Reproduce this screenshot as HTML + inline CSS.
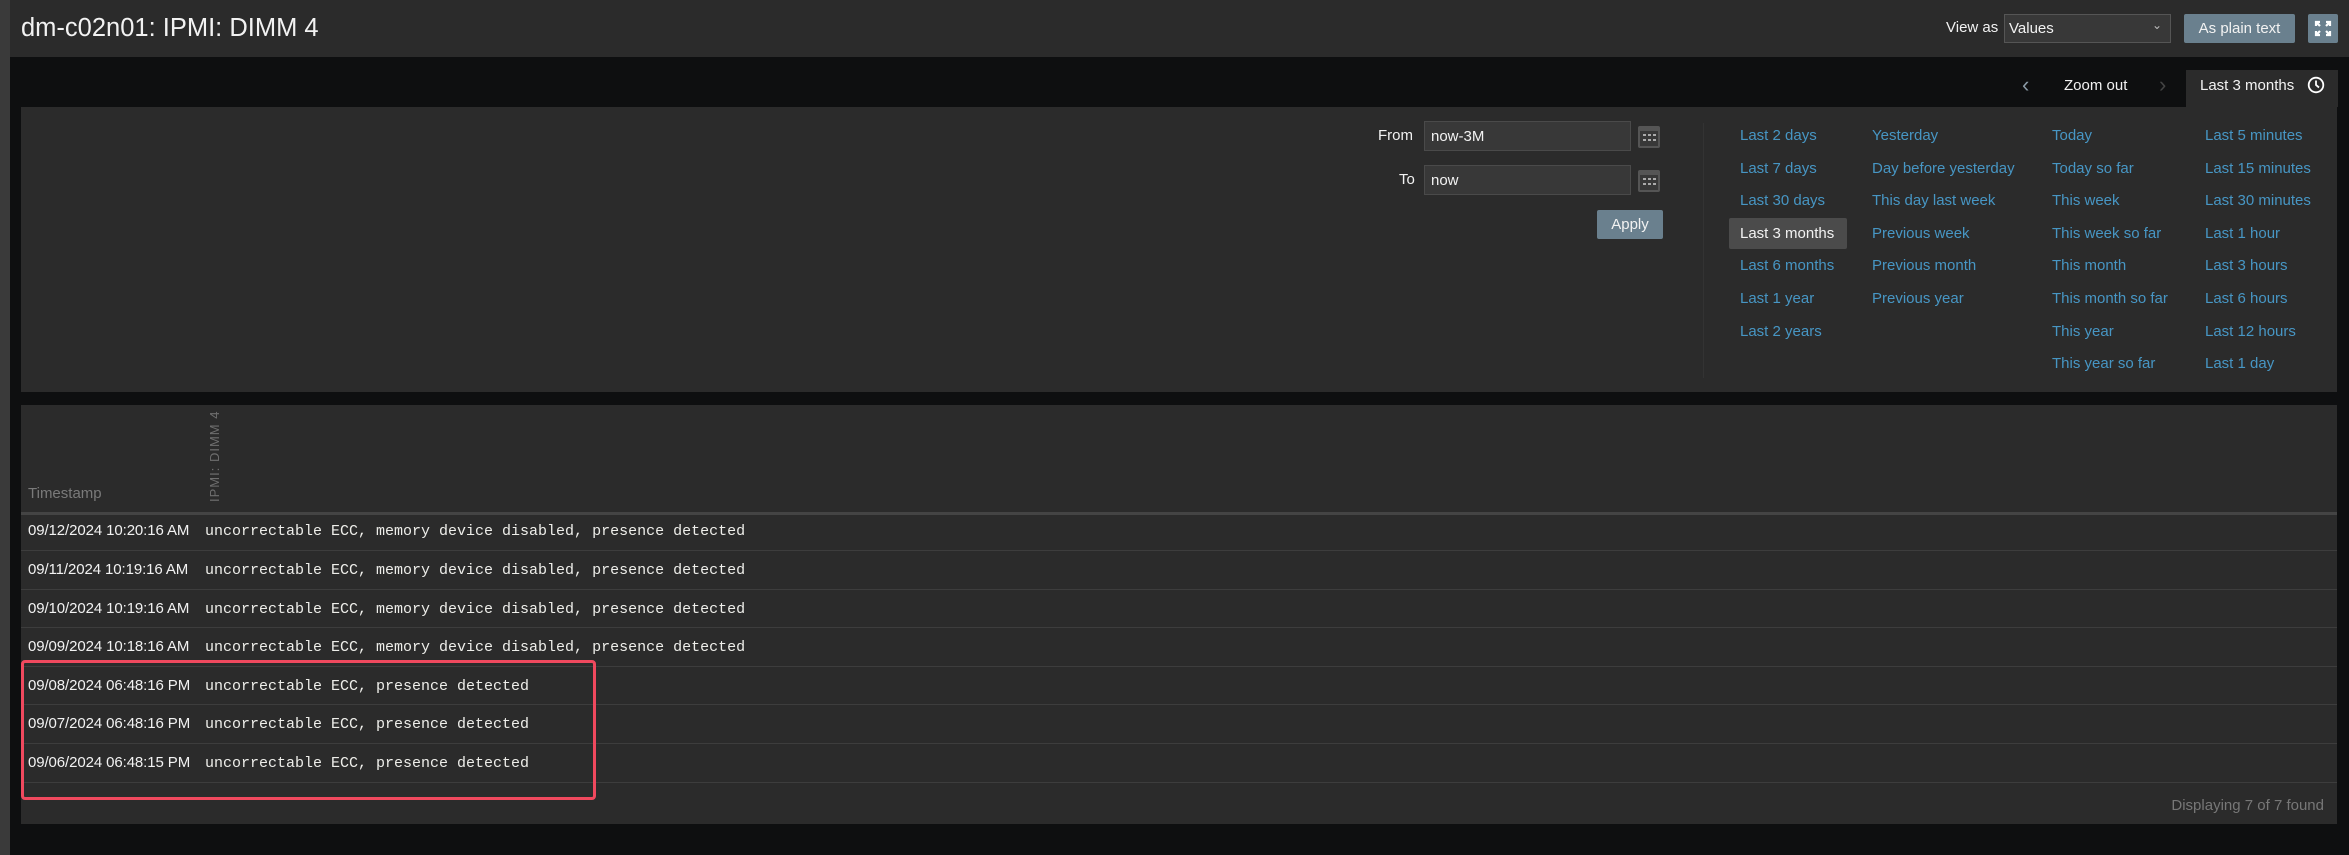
<!DOCTYPE html>
<html><head><meta charset="utf-8"><style>
*{box-sizing:border-box;margin:0;padding:0}
body{width:2349px;height:855px;background:#0e0f10;font-family:"Liberation Sans",sans-serif;position:relative;overflow:hidden;color:#f2f2f2}
.a{position:absolute}
.link{position:absolute;color:#4796c4;font-size:15px;white-space:nowrap}
.ts{position:absolute;left:28px;font-size:15px;letter-spacing:-0.1px;color:#f2f2f2}
.val{position:absolute;left:205px;font-family:"Liberation Mono",monospace;font-size:15px;color:#eeeeea;white-space:pre}
.line{position:absolute;left:21px;width:2316px;height:1px;background:#3d3d3d}
</style></head><body>
<div class="a" style="left:0;top:0;width:10px;height:855px;background:#3a3a3a"></div>
<div class="a" style="left:10px;top:0;width:2339px;height:57px;background:#2b2b2b"></div>
<div class="a" style="left:21px;top:14px;font-size:25.5px;color:#f2f2f2">dm-c02n01: IPMI: DIMM 4</div>
<div class="a" style="left:1946px;top:19px;font-size:15px">View as</div>
<div class="a" style="left:2004px;top:14px;width:167px;height:29px;background:#383838;border:1px solid #555;font-size:15px;padding:5px 0 0 4px">Values<span style="position:absolute;right:8px;top:3px;font-size:12px;color:#bbb">&#8964;</span></div>
<div class="a" style="left:2184px;top:14px;width:111px;height:29px;background:#6a808e;border-radius:2px;font-size:15px;text-align:center;line-height:29px">As plain text</div>
<div class="a" style="left:2308px;top:14px;width:30px;height:29px;background:#6a808e;border-radius:2px">
<svg width="30" height="29" viewBox="0 0 30 29"><g fill="none" stroke="#fff" stroke-width="2.2"><path d="M8 12V8h4M8 8l4 4M22 12V8h-4M22 8l-4 4M8 17v4h4M8 21l4-4M22 17v4h-4M22 21l-4-4"/></g></svg></div>
<div class="a" style="left:2022px;top:72px;font-size:22px;color:#8a9aa6">&#x2039;</div>
<div class="a" style="left:2064px;top:77px;font-size:15px">Zoom out</div>
<div class="a" style="left:2159px;top:72px;font-size:22px;color:#444">&#x203A;</div>
<div class="a" style="left:2186px;top:70px;width:152px;height:37px;background:#2b2b2b"></div>
<div class="a" style="left:2200px;top:77px;font-size:15px">Last 3 months</div>
<svg class="a" style="left:2307px;top:76px" width="18" height="18" viewBox="0 0 18 18"><circle cx="9" cy="9" r="7.3" fill="none" stroke="#fff" stroke-width="1.8"/><path d="M9 4.5V9l3 2.5" fill="none" stroke="#fff" stroke-width="1.8"/></svg>
<div class="a" style="left:21px;top:107px;width:2316px;height:285px;background:#2b2b2b"></div>
<div class="a" style="left:1378px;top:127px;font-size:15px">From</div>
<div class="a" style="left:1424px;top:121px;width:207px;height:30px;background:#383838;border:1px solid #4a4a4a;font-size:15px;padding:6px 0 0 6px">now-3M</div>
<div class="a" style="left:1399px;top:171px;font-size:15px">To</div>
<div class="a" style="left:1424px;top:165px;width:207px;height:30px;background:#383838;border:1px solid #4a4a4a;font-size:15px;padding:6px 0 0 6px">now</div>
<svg class="a" style="left:1637px;top:125px" width="24" height="24" viewBox="0 0 24 24"><rect x="1" y="1" width="22" height="22" rx="2" fill="#555"/><rect x="3" y="6" width="18" height="15" fill="#383838"/><g fill="#aaa"><rect x="6" y="9" width="3" height="2"/><rect x="11" y="9" width="3" height="2"/><rect x="16" y="9" width="3" height="2"/><rect x="6" y="14" width="3" height="2"/><rect x="11" y="14" width="3" height="2"/><rect x="16" y="14" width="3" height="2"/></g></svg>
<svg class="a" style="left:1637px;top:169px" width="24" height="24" viewBox="0 0 24 24"><rect x="1" y="1" width="22" height="22" rx="2" fill="#555"/><rect x="3" y="6" width="18" height="15" fill="#383838"/><g fill="#aaa"><rect x="6" y="9" width="3" height="2"/><rect x="11" y="9" width="3" height="2"/><rect x="16" y="9" width="3" height="2"/><rect x="6" y="14" width="3" height="2"/><rect x="11" y="14" width="3" height="2"/><rect x="16" y="14" width="3" height="2"/></g></svg>
<div class="a" style="left:1597px;top:210px;width:66px;height:29px;background:#6a808e;border-radius:2px;font-size:15px;text-align:center;line-height:29px">Apply</div>
<div class="a" style="left:1703px;top:123px;width:1px;height:255px;background:#333"></div>
<div class="a" style="left:1729px;top:218px;width:118px;height:31px;background:#4b4b4b;border-radius:2px"></div>
<div class="link" style="left:1740px;top:127px">Last 2 days</div>
<div class="link" style="left:1740px;top:160px">Last 7 days</div>
<div class="link" style="left:1740px;top:192px">Last 30 days</div>
<div class="link" style="left:1740px;top:225px;color:#f2f2f2">Last 3 months</div>
<div class="link" style="left:1740px;top:257px">Last 6 months</div>
<div class="link" style="left:1740px;top:290px">Last 1 year</div>
<div class="link" style="left:1740px;top:323px">Last 2 years</div>
<div class="link" style="left:1872px;top:127px">Yesterday</div>
<div class="link" style="left:1872px;top:160px">Day before yesterday</div>
<div class="link" style="left:1872px;top:192px">This day last week</div>
<div class="link" style="left:1872px;top:225px">Previous week</div>
<div class="link" style="left:1872px;top:257px">Previous month</div>
<div class="link" style="left:1872px;top:290px">Previous year</div>
<div class="link" style="left:2052px;top:127px">Today</div>
<div class="link" style="left:2052px;top:160px">Today so far</div>
<div class="link" style="left:2052px;top:192px">This week</div>
<div class="link" style="left:2052px;top:225px">This week so far</div>
<div class="link" style="left:2052px;top:257px">This month</div>
<div class="link" style="left:2052px;top:290px">This month so far</div>
<div class="link" style="left:2052px;top:323px">This year</div>
<div class="link" style="left:2052px;top:355px">This year so far</div>
<div class="link" style="left:2205px;top:127px">Last 5 minutes</div>
<div class="link" style="left:2205px;top:160px">Last 15 minutes</div>
<div class="link" style="left:2205px;top:192px">Last 30 minutes</div>
<div class="link" style="left:2205px;top:225px">Last 1 hour</div>
<div class="link" style="left:2205px;top:257px">Last 3 hours</div>
<div class="link" style="left:2205px;top:290px">Last 6 hours</div>
<div class="link" style="left:2205px;top:323px">Last 12 hours</div>
<div class="link" style="left:2205px;top:355px">Last 1 day</div>
<div class="a" style="left:21px;top:405px;width:2316px;height:419px;background:#2b2b2b"></div>
<div class="a" style="left:28px;top:485px;font-size:15px;color:#7a7a7a">Timestamp</div>
<div class="a" style="left:207px;top:502px;font-size:13px;color:#6e6e6e;transform:rotate(-90deg);transform-origin:0 0;white-space:nowrap;letter-spacing:1px">IPMI: DIMM 4</div>
<div class="a" style="left:21px;top:512px;width:2316px;height:3px;background:#444"></div>
<div class="ts" style="top:522px">09/12/2024 10:20:16 AM</div><div class="val" style="top:523px">uncorrectable ECC, memory device disabled, presence detected</div>
<div class="line" style="top:550px"></div>
<div class="ts" style="top:561px">09/11/2024 10:19:16 AM</div><div class="val" style="top:562px">uncorrectable ECC, memory device disabled, presence detected</div>
<div class="line" style="top:589px"></div>
<div class="ts" style="top:600px">09/10/2024 10:19:16 AM</div><div class="val" style="top:601px">uncorrectable ECC, memory device disabled, presence detected</div>
<div class="line" style="top:627px"></div>
<div class="ts" style="top:638px">09/09/2024 10:18:16 AM</div><div class="val" style="top:639px">uncorrectable ECC, memory device disabled, presence detected</div>
<div class="line" style="top:666px"></div>
<div class="ts" style="top:677px">09/08/2024 06:48:16 PM</div><div class="val" style="top:678px">uncorrectable ECC, presence detected</div>
<div class="line" style="top:704px"></div>
<div class="ts" style="top:715px">09/07/2024 06:48:16 PM</div><div class="val" style="top:716px">uncorrectable ECC, presence detected</div>
<div class="line" style="top:743px"></div>
<div class="ts" style="top:754px">09/06/2024 06:48:15 PM</div><div class="val" style="top:755px">uncorrectable ECC, presence detected</div>
<div class="line" style="top:782px"></div>
<div class="a" style="left:21px;top:660px;width:575px;height:140px;border:3px solid #f0495e;border-radius:4px"></div>
<div class="a" style="right:25px;top:797px;font-size:15px;color:#777">Displaying 7 of 7 found</div>
</body></html>
